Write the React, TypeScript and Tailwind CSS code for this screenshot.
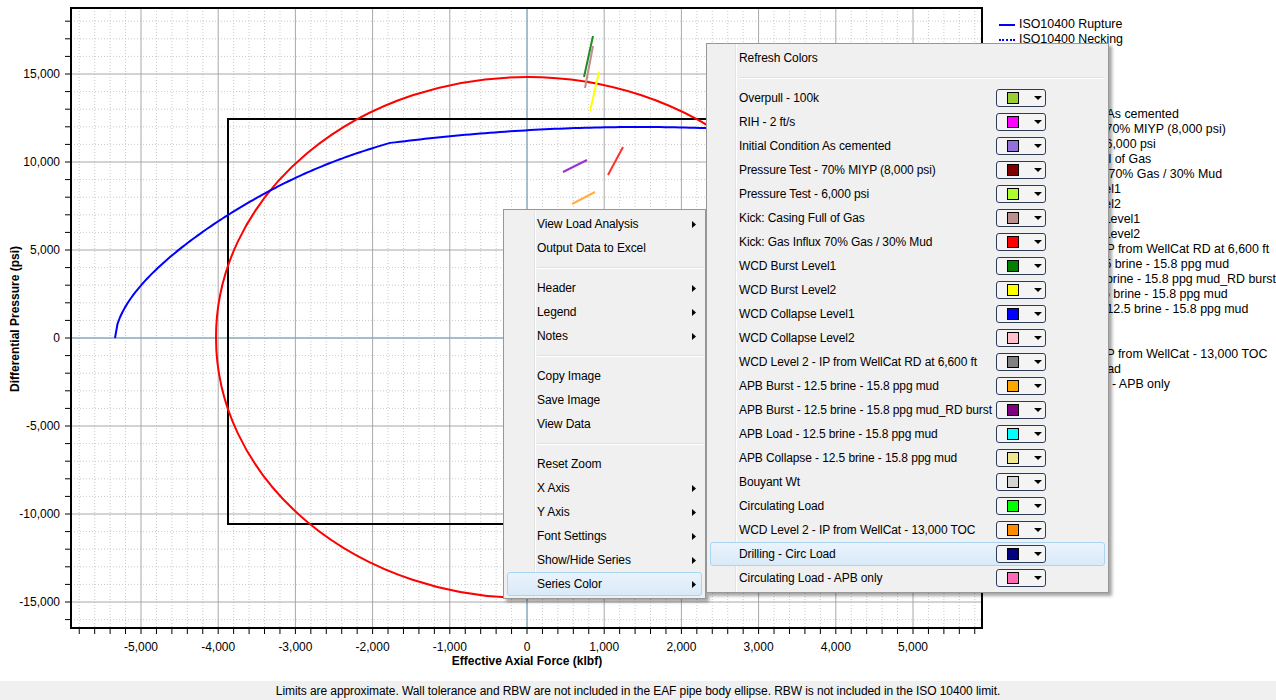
import React from 'react';

// chart scale (kips -> px, psi -> px)
const X = (k: number) => 527 + k * 0.0772;
const Y = (p: number) => 338 - p * 0.0176;

const seriesColors: [string, string][] = [
  ['Overpull - 100k', '#9acd32'],
  ['RIH - 2 ft/s', '#ff00ff'],
  ['Initial Condition As cemented', '#9370db'],
  ['Pressure Test - 70% MIYP (8,000 psi)', '#800000'],
  ['Pressure Test - 6,000 psi', '#adff2f'],
  ['Kick: Casing Full of Gas', '#bc8f8f'],
  ['Kick: Gas Influx 70% Gas / 30% Mud', '#ff0000'],
  ['WCD Burst Level1', '#008000'],
  ['WCD Burst Level2', '#ffff00'],
  ['WCD Collapse Level1', '#0000ff'],
  ['WCD Collapse Level2', '#ffc0cb'],
  ['WCD Level 2 - IP from WellCat RD at 6,600 ft', '#808080'],
  ['APB Burst - 12.5 brine - 15.8 ppg mud', '#ffa500'],
  ['APB Burst - 12.5 brine - 15.8 ppg mud_RD burst', '#800080'],
  ['APB Load - 12.5 brine - 15.8 ppg mud', '#00ffff'],
  ['APB Collapse - 12.5 brine - 15.8 ppg mud', '#f0e68c'],
  ['Bouyant Wt', '#d3d3d3'],
  ['Circulating Load', '#00ff00'],
  ['WCD Level 2 - IP from WellCat - 13,000 TOC', '#ff8c00'],
  ['Drilling - Circ Load', '#000080'],
  ['Circulating Load - APB only', '#ff69b4'],
];

const legendItems: [string, string][] = [
  ['Pipe Body', '#000000'],
  ['Connection', '#ff0000'],
  ...seriesColors,
];

// ISO 10400 rupture curve: rising part then a flat, slightly bowed part
function rupturePoints() {
  const pts: string[] = [];
  for (let dx = 0; dx <= 275; dx += 2.5) {
    const bump = 6 * Math.sin(Math.PI * Math.pow(dx / 275, 1.5));
    const y = 338 - 8.4 * Math.pow(dx, 0.56) - bump;
    pts.push(`${115 + dx},${y.toFixed(2)}`);
  }
  for (let x = 395; x <= 840; x += 5) {
    const t = (x - 640) / 250;
    pts.push(`${x},${(127 + 16 * t * t).toFixed(2)}`);
  }
  return pts.join(' ');
}

const segments: [number, number, number, number, string][] = [
  [584, 77, 593, 36, '#228b22'],
  [585, 88, 593, 46, '#bc8f8f'],
  [590, 111, 599, 72, '#ffff00'],
  [563, 172, 587, 160, '#9932cc'],
  [608, 175, 623, 147, '#ff3030'],
  [572, 204, 595, 192, '#ffb040'],
];

function fmt(n: number) {
  return n.toLocaleString('en-US');
}

function Chart() {
  const xs = Array.from({ length: 59 }, (_, i) => i - 29);
  const ys = Array.from({ length: 35 }, (_, i) => i - 16);

  return (
    <svg width={995} height={681} className="shrink-0 text-[12px]">
      <defs>
        <clipPath id="plot">
          <rect x={71} y={8} width={911} height={620} />
        </clipPath>
      </defs>

      {/* minor grid */}
      {xs.map((i) =>
        i % 5 !== 0 ? (
          <line key={'vx' + i} x1={X(i * 200)} y1={8} x2={X(i * 200)} y2={628} stroke="#cacaca" strokeDasharray="1 2" />
        ) : null
      )}
      {ys.map((i) =>
        i % 5 !== 0 ? (
          <line key={'hy' + i} x1={71} y1={Y(i * 1000)} x2={982} y2={Y(i * 1000)} stroke="#cacaca" strokeDasharray="1 2" />
        ) : null
      )}
      {/* major grid */}
      {xs.map((i) =>
        i % 5 === 0 && i !== 0 ? (
          <line key={'mx' + i} x1={X(i * 200)} y1={8} x2={X(i * 200)} y2={628} stroke="#a8a8a8" />
        ) : null
      )}
      {ys.map((i) =>
        i % 5 === 0 && i !== 0 ? (
          <line key={'my' + i} x1={71} y1={Y(i * 1000)} x2={982} y2={Y(i * 1000)} stroke="#a8a8a8" />
        ) : null
      )}
      {/* zero axes */}
      <line x1={X(0)} y1={8} x2={X(0)} y2={628} stroke="#86a9ba" strokeWidth={1.5} />
      <line x1={71} y1={Y(0)} x2={982} y2={Y(0)} stroke="#86a9ba" strokeWidth={1.5} />

      {/* series */}
      <g clipPath="url(#plot)" fill="none" strokeWidth={2}>
        <rect x={228} y={119} width={598} height={405} stroke="#000" />
        <ellipse cx={527} cy={337.5} rx={311} ry={260.5} stroke="#ff0000" />
        <polyline points={rupturePoints()} stroke="#0000ff" strokeLinejoin="round" />
        {segments.map(([x1, y1, x2, y2, c], i) => (
          <line key={i} x1={x1} y1={y1} x2={x2} y2={y2} stroke={c} />
        ))}
      </g>

      {/* frame */}
      <rect x={71} y={8} width={911} height={620} fill="none" stroke="#000" strokeWidth={2} />

      {/* ticks */}
      {xs.map((i) => (
        <line key={'tx' + i} x1={X(i * 200)} y1={628} x2={X(i * 200)} y2={634} stroke="#000" />
      ))}
      {ys.map((i) => (
        <line key={'ty' + i} x1={65} y1={Y(i * 1000)} x2={71} y2={Y(i * 1000)} stroke="#000" />
      ))}

      {/* tick labels */}
      {[-5, -4, -3, -2, -1, 0, 1, 2, 3, 4, 5].map((k) => (
        <text key={'lx' + k} x={X(k * 1000)} y={651} textAnchor="middle" fill="#000">
          {fmt(k * 1000)}
        </text>
      ))}
      {[15, 10, 5, 0, -5, -10, -15].map((p) => (
        <text key={'ly' + p} x={60} y={Y(p * 1000) + 4} textAnchor="end" fill="#000">
          {fmt(p * 1000)}
        </text>
      ))}

      {/* axis titles */}
      <text x={527} y={665} textAnchor="middle" fontWeight="bold" fill="#000">
        Effective Axial Force (klbf)
      </text>
      <text transform="translate(19,319) rotate(-90)" textAnchor="middle" fontWeight="bold" fill="#000">
        Differential Pressure (psi)
      </text>
    </svg>
  );
}

function Legend() {
  return (
    <div className="flex-1 overflow-hidden pt-[17px] pl-[4px] text-[12.4px]">
      <div className="flex h-[15px] items-center gap-[4px] whitespace-nowrap">
        <div className="h-[2px] w-[16px] bg-[#0000ff]" />
        <span>ISO10400 Rupture</span>
      </div>
      <div className="flex h-[15px] items-center gap-[4px] whitespace-nowrap">
        <div className="h-0 w-[16px] border-t-2 border-dotted border-[#0000ff]" />
        <span>ISO10400 Necking</span>
      </div>
      {legendItems.map(([name, c]) => (
        <div key={name} className="flex h-[15px] items-center gap-[4px] whitespace-nowrap">
          <div className="h-[2px] w-[16px]" style={{ backgroundColor: c }} />
          <span>{name}</span>
        </div>
      ))}
    </div>
  );
}

function Arrow() {
  return (
    <svg width={4} height={7} className="shrink-0">
      <polygon points="0,0 4,3.5 0,7" fill="#000" />
    </svg>
  );
}

type MenuEntry = { label?: string; sub?: boolean; sep?: boolean; active?: boolean };

const menuEntries: MenuEntry[] = [
  { label: 'View Load Analysis', sub: true },
  { label: 'Output Data to Excel' },
  { sep: true },
  { label: 'Header', sub: true },
  { label: 'Legend', sub: true },
  { label: 'Notes', sub: true },
  { sep: true },
  { label: 'Copy Image' },
  { label: 'Save Image' },
  { label: 'View Data' },
  { sep: true },
  { label: 'Reset Zoom' },
  { label: 'X Axis', sub: true },
  { label: 'Y Axis', sub: true },
  { label: 'Font Settings', sub: true },
  { label: 'Show/Hide Series', sub: true },
  { label: 'Series Color', sub: true, active: true },
];

function ContextMenu() {
  return (
    <div className="absolute left-[503px] top-[209px] h-[390px] w-[203px] border border-[#979797] bg-[#f0f0f0] pt-[2px] tracking-[-0.1px] shadow-[3px_3px_3px_rgba(0,0,0,0.35)]">
      <div className="absolute bottom-0 left-[30px] top-0 w-px bg-[#e2e3e3]" />
      <div className="absolute bottom-0 left-[31px] top-0 w-px bg-white" />
      {menuEntries.map((e, i) =>
        e.sep ? (
          <div key={i} className="flex h-[16px] items-center pl-[33px] pr-[1px]">
            <div className="h-[2px] w-full border-b border-white bg-[#e0e0e0]" />
          </div>
        ) : (
          <div
            key={i}
            className={
              'relative mx-[3px] flex h-[24px] items-center justify-between rounded-[3px] border pl-[29px] pr-[5px] ' +
              (e.active
                ? 'border-[#a9d4f2] bg-gradient-to-b from-[#eaf3fc] to-[#d9eaf8]'
                : 'border-transparent')
            }
          >
            <span>{e.label}</span>
            {e.sub && <Arrow />}
          </div>
        )
      )}
    </div>
  );
}

function ColorBox({ color }: { color: string }) {
  return (
    <div className="flex h-[18px] w-[50px] shrink-0 items-center rounded-[3px] border border-[#2d3d58] bg-[#f4f4f4]">
      <div className="ml-[10px] h-[12px] w-[12px] border border-black" style={{ backgroundColor: color }} />
      <svg width={8} height={4} className="ml-[15px]">
        <polygon points="0,0 8,0 4,4" fill="#000" />
      </svg>
    </div>
  );
}

function ColorMenu() {
  return (
    <div className="absolute left-[706px] top-[43px] h-[550px] w-[403px] border border-[#979797] bg-[#f0f0f0] pt-[2px] tracking-[-0.1px] shadow-[3px_3px_3px_rgba(0,0,0,0.35)]">
      <div className="absolute bottom-0 left-[28px] top-0 w-px bg-[#e2e3e3]" />
      <div className="absolute bottom-0 left-[29px] top-0 w-px bg-white" />
      <div className="mx-[3px] flex h-[24px] items-center border border-transparent pl-[28px]">Refresh Colors</div>
      <div className="flex h-[16px] items-center pl-[32px] pr-[3px]">
        <div className="h-[2px] w-full border-b border-white bg-[#e0e0e0]" />
      </div>
      {seriesColors.map(([name, c]) => (
        <div
          key={name}
          className={
            'relative mx-[3px] flex h-[24px] items-center justify-between rounded-[3px] border pl-[28px] pr-[58px] ' +
            (name === 'Drilling - Circ Load'
              ? 'border-[#a9d4f2] bg-gradient-to-b from-[#eaf3fc] to-[#d9eaf8]'
              : 'border-transparent')
          }
        >
          <span className="whitespace-nowrap">{name}</span>
          <ColorBox color={c} />
        </div>
      ))}
    </div>
  );
}

export default function App() {
  return (
    <div className="relative h-[700px] w-[1276px] overflow-hidden bg-white font-['Liberation_Sans',Arial,sans-serif] text-[12px] leading-none text-black">
      <div className="flex h-[681px]">
        <Chart />
        <Legend />
      </div>
      <div className="flex h-[19px] items-center justify-center bg-[#f0f0f0] tracking-[-0.08px]">
        Limits are approximate. Wall tolerance and RBW are not included in the EAF pipe body ellipse. RBW is not included in the ISO 10400 limit.
      </div>
      <ContextMenu />
      <ColorMenu />
    </div>
  );
}
